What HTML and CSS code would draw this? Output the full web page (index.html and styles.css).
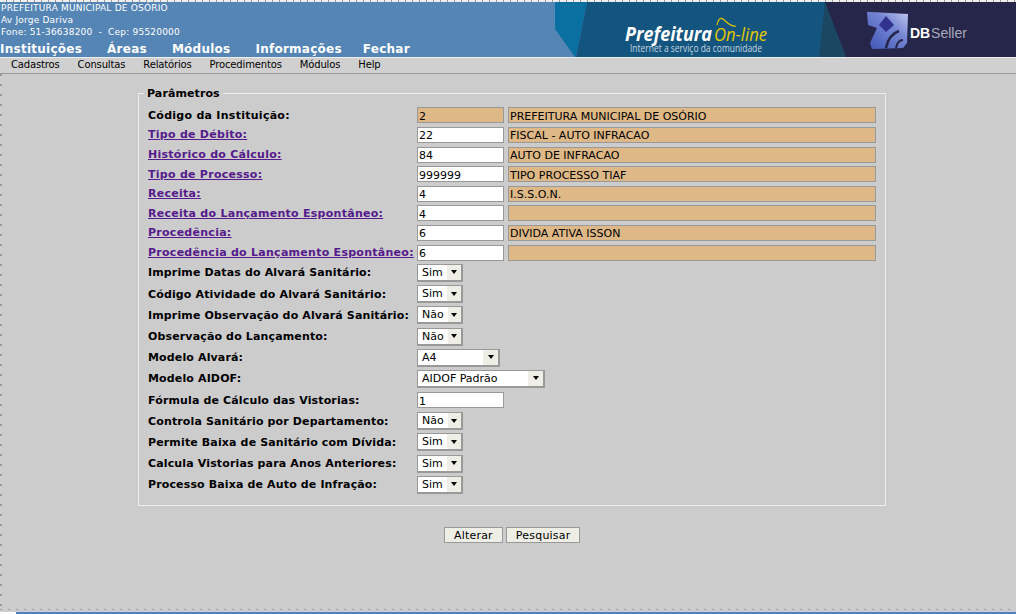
FILE: index.html
```html
<!DOCTYPE html>
<html lang="pt-BR">
<head>
    <meta charset="UTF-8">
    <title>Parâmetros</title>
    <link rel="stylesheet" href="styles.css">
</head>
<body>
<div class="edgeTop"></div>
<div id="topo">
    <div class="topoEsq">
        <div class="endereco">
            <div>PREFEITURA MUNICIPAL DE OSÓRIO</div>
            <div>Av Jorge Dariva</div>
            <div>Fone: 51-36638200 &nbsp;- &nbsp;Cep: 95520000</div>
        </div>
        <div class="navTopo">
            <a href="#">Instituições</a>
            <a href="#">Áreas</a>
            <a href="#">Módulos</a>
            <a href="#">Informações</a>
            <a href="#" class="fechar">Fechar</a>
        </div>
    </div>
    <svg class="banner" width="461" height="55" viewBox="0 0 461 55">
        <defs>
            <linearGradient id="cubo" x1="0" y1="1" x2="1" y2="0">
                <stop offset="0" stop-color="#3d55b5"/>
                <stop offset="0.6" stop-color="#7384d2"/>
                <stop offset="1" stop-color="#c3c9ee"/>
            </linearGradient>
            <filter id="borra"><feGaussianBlur stdDeviation="0.6"/></filter>
        </defs>
        <rect width="461" height="55" fill="#5585b5"/>
        <polygon points="0,0 32,0 21,55 20,55 0,27" fill="#0a6fa1"/>
        <polygon points="32,0 271,0 291,55 21,55" fill="#14557f"/>
        <polygon points="270,0 291,55 264,55" fill="#1b4763"/>
        <polygon points="270,0 461,0 461,55 291,55" fill="#25264a"/>
        <text x="70" y="38.5" class="bPref" textLength="87" lengthAdjust="spacingAndGlyphs">Prefeitura</text>
        <text x="159" y="38.5" class="bOn" textLength="53" lengthAdjust="spacingAndGlyphs">On-line</text>
        <path d="M162 23 C163 18 165 15 168 17 C172 20 175 25 181 24" fill="none" stroke="#e3c800" stroke-width="1.2"/>
        <text x="75" y="49.5" class="bSub" textLength="132" lengthAdjust="spacingAndGlyphs">Internet a serviço da comunidade</text>
        <g filter="url(#borra)">
            <polygon points="312,9.7 353,12 352,41 348,46 317,47 315,41 322,26 313,23" fill="url(#cubo)"/>
            <polygon points="331,14 339,23 331,30 324,23" fill="#33308f"/>
            <path d="M331 46 C333 36 338 31 344 29" fill="none" stroke="#25264a" stroke-width="2.5"/>
            <path d="M341 46 C342 41 344 38 348 38" fill="none" stroke="#25264a" stroke-width="2"/>
        </g>
        <text x="355" y="36" class="bDb">DB</text>
        <text x="376" y="36" class="bSeller" textLength="36" lengthAdjust="spacingAndGlyphs">Seller</text>
    </svg>
</div>
<div id="menu">
    <a href="#">Cadastros</a>
    <a href="#">Consultas</a>
    <a href="#">Relatórios</a>
    <a href="#">Procedimentos</a>
    <a href="#">Módulos</a>
    <a href="#">Help</a>
</div>

<form id="form1" onsubmit="return false">
    <fieldset class="quadro">
        <legend>Parâmetros</legend>
        <div class="linhas">
            <div class="linha curta"><b>Código da Instituição:</b><input class="cod ro" value="2" readonly><input class="desc" value="PREFEITURA MUNICIPAL DE OSÓRIO" readonly></div>
            <div class="linha curta"><a href="#">Tipo de Débito:</a><input class="cod" value="22"><input class="desc" value="FISCAL - AUTO INFRACAO" readonly></div>
            <div class="linha curta"><a href="#">Histórico do Cálculo:</a><input class="cod" value="84"><input class="desc" value="AUTO DE INFRACAO" readonly></div>
            <div class="linha curta"><a href="#">Tipo de Processo:</a><input class="cod" value="999999"><input class="desc" value="TIPO PROCESSO TIAF" readonly></div>
            <div class="linha curta"><a href="#">Receita:</a><input class="cod" value="4"><input class="desc" value="I.S.S.O.N." readonly></div>
            <div class="linha curta"><a href="#">Receita do Lançamento Espontâneo:</a><input class="cod" value="4"><input class="desc" value="" readonly></div>
            <div class="linha curta"><a href="#">Procedência:</a><input class="cod" value="6"><input class="desc" value="DIVIDA ATIVA ISSON" readonly></div>
            <div class="linha curta"><a href="#">Procedência do Lançamento Espontâneo:</a><input class="cod" value="6"><input class="desc" value="" readonly></div>
            <div class="linha"><b>Imprime Datas do Alvará Sanitário:</b><div class="sel s46"><span>Sim</span><i></i></div></div>
            <div class="linha"><b>Código Atividade do Alvará Sanitário:</b><div class="sel s46"><span>Sim</span><i></i></div></div>
            <div class="linha"><b>Imprime Observação do Alvará Sanitário:</b><div class="sel s46"><span>Não</span><i></i></div></div>
            <div class="linha"><b>Observação do Lançamento:</b><div class="sel s46"><span>Não</span><i></i></div></div>
            <div class="linha"><b>Modelo Alvará:</b><div class="sel s83"><span>A4</span><i></i></div></div>
            <div class="linha"><b>Modelo AIDOF:</b><div class="sel s128"><span>AIDOF Padrão</span><i></i></div></div>
            <div class="linha"><b>Fórmula de Cálculo das Vistorias:</b><input class="cod" value="1"></div>
            <div class="linha"><b>Controla Sanitário por Departamento:</b><div class="sel s46"><span>Não</span><i></i></div></div>
            <div class="linha"><b>Permite Baixa de Sanitário com Dívida:</b><div class="sel s46"><span>Sim</span><i></i></div></div>
            <div class="linha"><b>Calcula Vistorias para Anos Anteriores:</b><div class="sel s46"><span>Sim</span><i></i></div></div>
            <div class="linha"><b>Processo Baixa de Auto de Infração:</b><div class="sel s46"><span>Sim</span><i></i></div></div>
        </div>
    </fieldset>
    <div class="botoes">
        <input type="submit" value="Alterar">
        <input type="button" value="Pesquisar">
    </div>
</form>
<div class="edgeLeft"></div>
<div class="edgeTicks"></div>
<div class="edgeBase"><span></span></div>
</body>
</html>
```

FILE: styles.css
```css
* {
    margin: 0;
    padding: 0;
    box-sizing: border-box;
}

html, body {
    height: 100%;
}

body {
    width: 1016px;
    height: 614px;
    overflow: hidden;
    position: relative;
    background-color: #cccccc;
    font-family: "DejaVu Sans", sans-serif;
    font-size: 11px;
    color: #000;
}

.edgeTop {
    height: 2px;
    background: repeating-linear-gradient(90deg, #eeeeee 0, #eeeeee 6px, #999 6px, #999 7px);
}

#topo {
    height: 55px;
    background-color: #5585b5;
    display: flex;
    justify-content: space-between;
}

.topoEsq {
    color: #fff;
}

.endereco {
    font-size: 9px;
    line-height: 12px;
    letter-spacing: 0.2px;
    padding-left: 1px;
}

.navTopo {
    display: flex;
    gap: 25px;
    margin-top: 3px;
}

.navTopo a {
    color: #fff;
    font-size: 12px;
    font-weight: bold;
    line-height: 16px;
    text-decoration: none;
    letter-spacing: 0.25px;
}

.navTopo .fechar {
    margin-left: -4px;
}

.banner {
    display: block;
    flex: none;
}

.bPref {
    font: italic bold 20px "Open Sans", sans-serif;
    fill: #fff;
}

.bOn {
    font: italic 19px "Open Sans", sans-serif;
    fill: #e3c800;
}

.bSub {
    font: 10px "Open Sans", sans-serif;
    fill: #c8d5e0;
}

.bDb {
    font: bold 14px "Liberation Sans", sans-serif;
    fill: #fff;
}

.bSeller {
    font: 14px "Liberation Sans", sans-serif;
    fill: #a9a9b8;
}

#menu {
    height: 17px;
    background-color: #d0d0d0;
    border-top: 1px solid #eeeeee;
    border-bottom: 1px solid #999;
    display: flex;
    gap: 18px;
    padding-left: 11px;
    font-size: 10px;
    line-height: 14px;
    letter-spacing: -0.15px;
}

#menu a {
    color: #000;
    text-decoration: none;
}

.quadro {
    width: 748px;
    height: 420px;
    margin: 12px 0 0 138px;
    border: 1px solid #eeeeee;
    padding: 0 9px;
}

.quadro legend {
    font-weight: bold;
    padding: 0 3px;
    margin-left: -4px;
    line-height: 15px;
    letter-spacing: 0.1px;
}

.linhas {
    padding-top: 4.6px;
}

.linha {
    display: flex;
    align-items: center;
    height: 21.2px;
    letter-spacing: 0.14px;
}

.linha.curta {
    height: 19.6px;
    letter-spacing: 0.27px;
}

.linha b, .linha a {
    flex: none;
    width: 269px;
    white-space: nowrap;
    font-weight: bold;
}

.linha a {
    color: #551a8b;
}

input {
    font-family: "DejaVu Sans", sans-serif;
    font-size: 11px;
    color: #000;
    outline: none;
    border-radius: 0;
}

.cod, .desc {
    height: 16px;
    border: 1px solid #999;
    background-color: #fff;
    padding: 2px 1px 0;
    letter-spacing: 0;
}

.cod {
    width: 87px;
}

.desc {
    width: 368px;
    margin-left: 4px;
    background-color: #deb887;
}

.cod.ro {
    background-color: #deb887;
}

.sel {
    height: 18px;
    display: flex;
    background-color: #fff;
    border: 1px solid #999;
    border-width: 1px 2px 2px 1px;
    letter-spacing: 0;
}

.sel span {
    flex: 1;
    padding: 0 4px;
    line-height: 15px;
}

.sel i {
    width: 15px;
    background-color: #eeeee6;
    display: flex;
    align-items: center;
    justify-content: center;
}

.sel i::after {
    content: "";
    border: 3px solid transparent;
    border-top: 4px solid #000;
    border-bottom: 0;
}

.s46 { width: 46px; }
.s83 { width: 83px; }
.s128 { width: 128px; }

.botoes {
    display: flex;
    gap: 3px;
    margin: 21px 0 0 444px;
}

.botoes input {
    height: 16px;
    border: 1px solid #999;
    background-color: #eeeee6;
    padding: 0 9px;
    letter-spacing: 0.2px;
}

/* bordas pontilhadas da janela */
.edgeLeft {
    position: absolute;
    left: 0;
    top: 74px;
    bottom: 5px;
    width: 2px;
    background: repeating-linear-gradient(180deg, #999 0, #999 2px, transparent 2px, transparent 10px);
}

.edgeTicks {
    position: absolute;
    left: 0;
    right: 0;
    bottom: 4px;
    height: 1px;
    background: repeating-linear-gradient(90deg, #999 0, #999 2px, transparent 2px, transparent 8px);
}

.edgeBase {
    position: absolute;
    left: 0;
    right: 0;
    bottom: 0;
    height: 2px;
    background-color: #4f7fc0;
}

.edgeBase span {
    display: block;
    width: 16px;
    height: 2px;
    background-color: #fff;
}
```
